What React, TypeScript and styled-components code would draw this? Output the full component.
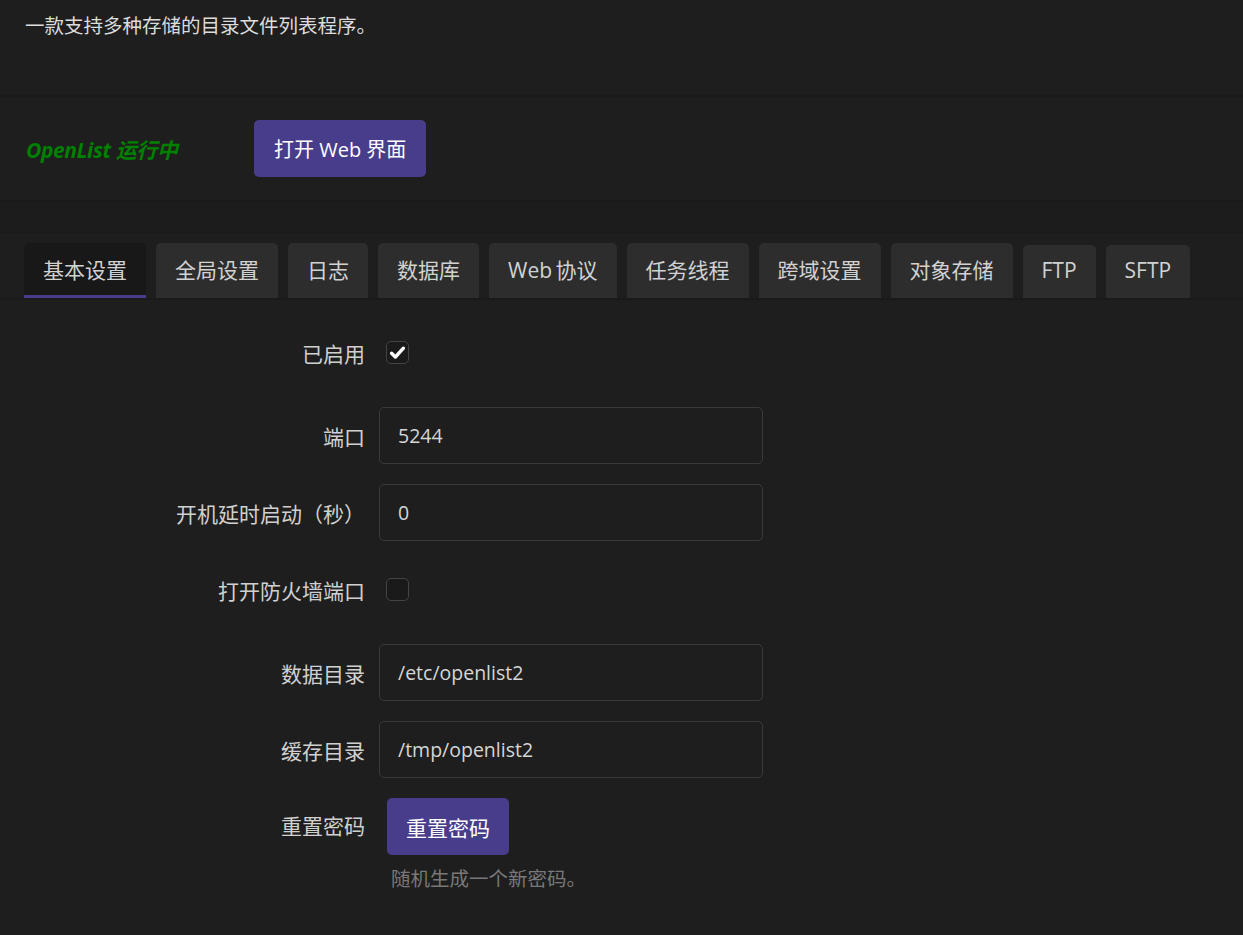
import { createGlobalStyle } from 'styled-components';
import styled from 'styled-components';

const GlobalStyle = createGlobalStyle`
    html, body {
        margin: 0;
        padding: 0;
        background: #1e1e1e;
    }

    body {
        font-family: "Open Sans", "Noto Sans CJK SC", sans-serif;
        color: #d4d4d4;
    }
`;

const StyledPage = styled.div`
    min-height: 935px;
    background: #1e1e1e;
    display: flex;
    flex-direction: column;
`;

const DescSection = styled.section`
    height: 97px;
    padding: 12px 25px 0;
    box-sizing: border-box;
    border-bottom: 2px solid #1a1a1a;

    > .descText {
        font-size: 19.5px;
        line-height: 27px;
        color: #dcdcdc;
    }
`;

const StatusSection = styled.section`
    height: 105px;
    padding: 0 24px 0 26px;
    box-sizing: border-box;
    display: flex;
    align-items: center;
    gap: 74px;
    border-bottom: 2px solid #1a1a1a;

    > .statusText {
        width: 154px;
        color: #008000;
        font-size: 21px;
        font-weight: 700;
        font-style: italic;
        letter-spacing: -0.4px;
        white-space: nowrap;
    }
`;

const PrimaryButton = styled.button<{ $small?: boolean }>`
    height: 57px;
    padding: 0 ${({ $small }) => ($small ? '19px' : '20px')};
    border: none;
    border-radius: 5px;
    background: #483d8b;
    color: #ffffff;
    font-family: "Open Sans", "Noto Sans CJK SC", sans-serif;
    font-size: ${({ $small }) => ($small ? '21px' : '20px')};
    cursor: pointer;
`;

const Spacer = styled.div`
    height: 29px;
    background: #1c1c1c;
    border-bottom: 2px solid #1a1a1a;
`;

const TabBar = styled.nav`
    height: 67px;
    padding: 12px 24px 0;
    box-sizing: border-box;
    display: flex;
    align-items: flex-end;
    gap: 10px;
    border-bottom: 2px solid #1a1a1a;
`;

const Tab = styled.div<{ $active?: boolean; $latin?: boolean }>`
    height: ${({ $latin }) => ($latin ? '53px' : '55px')};
    padding: 0 19px ${({ $active }) => ($active ? '0' : '3px')};
    box-sizing: border-box;
    display: flex;
    align-items: center;
    border-radius: 5px 5px 0 0;
    background: ${({ $active }) => ($active ? '#181818' : '#2d2d2d')};
    border-bottom: ${({ $active }) => ($active ? '3px solid #483d8b' : 'none')};
    color: #d2d2d2;
    font-size: 21px;
    word-spacing: -2px;
    white-space: nowrap;
`;

const Form = styled.div`
    padding: 24px 24px 40px;
    display: flex;
    flex-direction: column;
    gap: 20px;
`;

const Row = styled.div<{ $check?: boolean; $top?: boolean }>`
    display: flex;
    align-items: ${({ $top }) => ($top ? 'flex-start' : 'center')};
    gap: 14px;
    min-height: 57px;
    margin-bottom: ${({ $check }) => ($check ? '6px' : '0')};
`;

const Label = styled.div<{ $tall?: boolean }>`
    width: 341px;
    text-align: right;
    color: #d0d0d0;
    font-size: 21px;
    line-height: ${({ $tall }) => ($tall ? '57px' : 'normal')};
    white-space: nowrap;
`;

const TextInput = styled.div`
    width: 384px;
    height: 57px;
    box-sizing: border-box;
    padding: 0 18px;
    display: flex;
    align-items: center;
    border: 1px solid #3a3a3a;
    border-radius: 5px;
    color: #d6d6d6;
    font-size: 19.5px;
`;

const CheckBox = styled.div`
    margin-left: 7px;
    width: 23px;
    height: 23px;
    box-sizing: border-box;
    border: 1px solid #444;
    border-radius: 5px;
    background: #1a1a1a;
    display: flex;
    align-items: center;
    justify-content: center;
`;

const FieldStack = styled.div`
    display: flex;
    flex-direction: column;
    align-items: flex-start;
    gap: 8px;
    margin-left: 8px;

    > .hint {
        margin-left: 4px;
        color: #787878;
        font-size: 19.5px;
    }
`;

const tabs = ['基本设置', '全局设置', '日志', '数据库', 'Web 协议', '任务线程', '跨域设置', '对象存储', 'FTP', 'SFTP'];

function CheckMark() {
    return (
        <svg width="15" height="13" viewBox="0 0 15 13">
            <path
                d="M1.6 7.2 L5.4 11 L13.4 2.2"
                fill="none"
                stroke="#ffffff"
                strokeWidth="3.4"
                strokeLinecap="round"
                strokeLinejoin="round" />
        </svg>
    );
}

export default function App() {
    return (
        <StyledPage>
            <GlobalStyle />

            <DescSection>
                <div className="descText">一款支持多种存储的目录文件列表程序。</div>
            </DescSection>

            <StatusSection>
                <div className="statusText">OpenList 运行中</div>
                <PrimaryButton>打开 Web 界面</PrimaryButton>
            </StatusSection>

            <Spacer />

            <TabBar>
                {tabs.map((name, i) => (
                    <Tab
                        key={name}
                        $active={i === 0}
                        $latin={name === 'FTP' || name === 'SFTP'}>
                        {name}
                    </Tab>
                ))}
            </TabBar>

            <Form>
                <Row $check>
                    <Label>已启用</Label>
                    <CheckBox>
                        <CheckMark />
                    </CheckBox>
                </Row>

                <Row>
                    <Label>端口</Label>
                    <TextInput>5244</TextInput>
                </Row>

                <Row>
                    <Label>开机延时启动（秒）</Label>
                    <TextInput>0</TextInput>
                </Row>

                <Row $check>
                    <Label>打开防火墙端口</Label>
                    <CheckBox />
                </Row>

                <Row>
                    <Label>数据目录</Label>
                    <TextInput>/etc/openlist2</TextInput>
                </Row>

                <Row>
                    <Label>缓存目录</Label>
                    <TextInput>/tmp/openlist2</TextInput>
                </Row>

                <Row $top>
                    <Label $tall>重置密码</Label>
                    <FieldStack>
                        <PrimaryButton $small>重置密码</PrimaryButton>
                        <div className="hint">随机生成一个新密码。</div>
                    </FieldStack>
                </Row>
            </Form>
        </StyledPage>
    );
}
